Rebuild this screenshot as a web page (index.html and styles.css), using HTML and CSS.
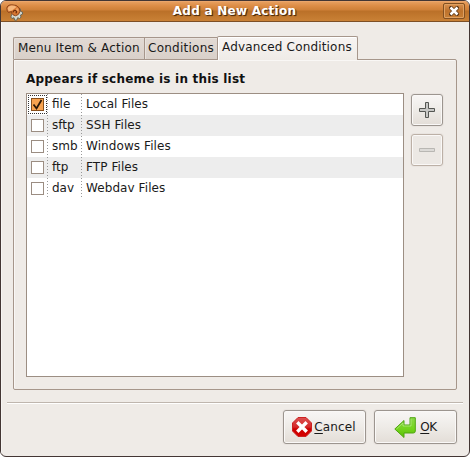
FILE: index.html
```html
<!DOCTYPE html>
<html lang="en">
<head>
<meta charset="utf-8">
<title>Add a New Action</title>
<link rel="stylesheet" href="styles.css">
</head>
<body>
<div class="window">
  <header class="titlebar">
    <svg class="app-icon" width="17" height="17" viewBox="0 0 17 17">
      <path d="M12 4l2.300.8.2 2.400 2 1v2l-2 .8.5 2.200-1.500 1.300-1.800-.8-1 2.500H8.700L8 13.700l-2 .8L4.800 13 6 10z" fill="#d5d8cd" stroke="#5f6156" stroke-width=".9"/>
      <path d="M.8 4.500Q1 1 5.500.800 11 .500 13.300 4q1.700 4-1 6.500-3 2.500-5.300.3Q5.300 9.500 5.500 7.500L2.500 8.500Q.800 7 .8 4.500z" fill="#d87a34" stroke="#84401a" stroke-width=".9"/>
      <path d="M1.600 5Q2 1.700 6 1.600q3 0 4.500 1.400L6 6.500 2.800 7.300z" fill="#f6b77c"/>
      <path d="M11 3.500q2 1.500 1.700 4L9.500 6.500z" fill="#efa263"/>
      <path d="M7 8.500Q7.500 6 9.500 6.500q2 1.200.2 2.700" fill="none" stroke="#6e2e0d" stroke-width="1.200"/>
    </svg>
    <h1 class="title">Add a New Action</h1>
    <button class="close" aria-label="Close">
      <svg width="10" height="10" viewBox="0 0 10 10"><path d="M2 2l6 6m0-6l-6 6" stroke="#5b3514" stroke-width="4" stroke-linecap="square"/><path d="M1.500 1.500l7 7m0-7l-7 7" stroke="#fff" stroke-width="2.600"/></svg>
    </button>
  </header>
  <main class="content">
    <nav class="tabs">
      <div class="tab tab-menu"><span>Menu Item &amp; Action</span></div>
      <div class="tab tab-cond"><span>Conditions</span></div>
      <div class="tab tab-active"><span>Advanced Conditions</span></div>
    </nav>
    <section class="panel">
      <h2 class="heading">Appears if scheme is in this list</h2>
      <div class="body">
        <div class="list">
          <div class="row"><div class="cell-check"><div class="focus"><i class="box checked"><svg width="13" height="13" viewBox="0 0 13 13"><path d="M2.500 6.500l3 4L10.500 2" fill="none" stroke="#2b1808" stroke-width="1.800"/></svg></i></div></div><div class="cell-scheme">file</div><div class="cell-name">Local Files</div></div>
          <div class="row"><div class="cell-check"><i class="box"></i></div><div class="cell-scheme">sftp</div><div class="cell-name">SSH Files</div></div>
          <div class="row"><div class="cell-check"><i class="box"></i></div><div class="cell-scheme">smb</div><div class="cell-name">Windows Files</div></div>
          <div class="row"><div class="cell-check"><i class="box"></i></div><div class="cell-scheme">ftp</div><div class="cell-name">FTP Files</div></div>
          <div class="row"><div class="cell-check"><i class="box"></i></div><div class="cell-scheme">dav</div><div class="cell-name">Webdav Files</div></div>
        </div>
        <div class="tools">
          <button class="button tool" aria-label="Add"><svg width="16" height="16" viewBox="0 0 16 16"><path d="M6.500.500h3v6h6v3h-6v6h-3v-6h-6v-3h6z" fill="#c8c8c6" stroke="#555753"/></svg></button>
          <button class="button tool disabled" aria-label="Remove" disabled><svg width="16" height="16" viewBox="0 0 16 16"><path d="M.500 6.500h15v3H.500z" fill="#dcdad7" stroke="#b9b7b3"/></svg></button>
        </div>
      </div>
    </section>
    <hr class="separator">
    <footer class="actions">
      <button class="button action cancel">
        <svg width="20" height="20" viewBox="0 0 20 20"><defs><linearGradient id="red" x2="0" y2="1"><stop stop-color="#dc5050"/><stop offset=".5" stop-color="#d42a2a"/><stop offset=".6" stop-color="#cc0000"/><stop offset="1" stop-color="#d40000"/></linearGradient></defs><path d="M6 .500h8L19.500 6v8L14 19.500H6L.500 14V6z" fill="url(#red)" stroke="#cc2222"/><path d="M6.500 6.500l7 7m0-7l-7 7" stroke="#fff" stroke-width="3.400" stroke-linecap="square"/></svg>
        <span><u>C</u>ancel</span>
      </button>
      <button class="button action ok">
        <svg width="22" height="22" viewBox="0 0 22 22"><defs><linearGradient id="green" x2="0" y2="1"><stop stop-color="#8bd94a"/><stop offset=".55" stop-color="#74d41c"/><stop offset="1" stop-color="#5abf08"/></linearGradient></defs><path d="M16 .700h5.300V14q0 2-2 2H10v4.500L.800 12 10 3.500V8h6z" fill="url(#green)" stroke="#4fa511"/><path d="M17 1.700v7.300H9V6L2.500 12" fill="none" stroke="#b0ea7c" stroke-width=".8"/></svg>
        <span><u>O</u>K</span>
      </button>
    </footer>
  </main>
</div>
</body>
</html>
```
FILE: styles.css
```css
* { box-sizing: border-box; }
body {
  margin: 0;
  background: #fff;
  color: #1a1a1a;
  font: 12px/15px "DejaVu Sans", sans-serif;
}
button { font: inherit; color: inherit; padding: 0; }
svg { display: block; flex: none; }
.window {
  width: 470px;
  height: 457px;
  border: 1px solid #433634;
  border-radius: 6px;
  background: #efebe7;
  overflow: hidden;
}
.titlebar {
  display: flex;
  align-items: center;
  height: 21px;
  padding: 0 5px;
  background: linear-gradient(#e9a263 0, #dc8c45 5px, #cf8038 9px, #ba7028 10px, #c98136 20px);
  border-bottom: 1px solid #7d4f25;
  box-shadow: inset 0 1px #eba66b;
}
.app-icon { margin-top: 2px; }
.title {
  flex: 1;
  margin: 0;
  padding-left: 3px;
  text-align: center;
  color: #fff;
  font-size: 12px;
  font-weight: bold;
  letter-spacing: .25px;
  line-height: 18px;
  text-shadow: 1px 1px 1px #4d2b0c, 1px 1px #754519;
}
.close {
  display: grid;
  place-items: center;
  width: 22px;
  height: 16px;
  margin-right: -1px;
  border: 1px solid #825021;
  border-radius: 2px;
  background: linear-gradient(#d99050, #bd722c 50%, #c88036);
  box-shadow: inset 0 0 0 1px #dfa061;
}
.content {
  height: 434px;
  border: solid #f7f5f3;
  border-width: 0 0 0 1px;
  padding: 14px 12px 0 11px;
}
.tabs { display: flex; align-items: flex-end; height: 23px; }
.tab {
  height: 22px;
  border: 1px solid #a6968b;
  border-right: 0;
  border-bottom: 0;
  background: linear-gradient(#e2dad4, #d9d0c9);
  box-shadow: inset 1px 1px #e9e3de;
  line-height: 21px;
  letter-spacing: .17px;
  white-space: nowrap;
  padding-left: 4px;
}
.tab-menu { width: 131px; border-radius: 2px 0 0; }
.tab-cond { width: 73px; padding-left: 3px; letter-spacing: .25px; }
.tab-active {
  position: relative;
  width: 141px;
  height: 24px;
  margin-bottom: -1px;
  border-right: 1px solid #a6968b;
  border-radius: 2px 2px 0 0;
  background: linear-gradient(#f7f4f2, #efebe7);
  box-shadow: inset 1px 1px #fff;
}
.panel {
  height: 331px;
  border: 1px solid #a6968b;
  border-radius: 0 2px 2px;
  box-shadow: inset 1px 1px #f9f7f5;
  padding: 12px;
}
.heading {
  margin: 0 0 6px;
  font-size: 12px;
  letter-spacing: .21px;
  line-height: 15px;
  color: #111;
}
.body { display: flex; gap: 7px; }
.list {
  width: 378px;
  height: 284px;
  border: 1px solid #9c8e83;
  background: #fff;
}
.row { display: flex; height: 21px; line-height: 21px; }
.row:nth-child(even) { background: #ededed; }
.cell-check {
  width: 21px;
  padding: 4px 0 0 4px;
}
.cell-check, .cell-scheme {
  background: repeating-linear-gradient(#999 0 1px, transparent 1px 3px) right / 1px 100% no-repeat;
}
.focus {
  width: 19px;
  height: 19px;
  margin: -3px 0 0 -3px;
  border: 1px dotted #333;
  padding: 2px;
}
.box {
  display: block;
  width: 13px;
  height: 13px;
  border: 1px solid #9b8d82;
  background: #fff;
}
.box.checked { border-color: #884f1b; background: #f8a350; }
.checked svg { margin: -1px; }
.cell-scheme { width: 34px; padding-left: 4px; }
.cell-name { padding-left: 4px; letter-spacing: .08px; }
.tools { display: flex; flex-direction: column; gap: 8px; padding-top: 1px; }
.button {
  display: flex;
  align-items: center;
  justify-content: center;
  border: 1px solid #9c958f;
  border-radius: 3px;
  background: linear-gradient(#f8f6f5, #eeebe7 50%, #e3ddd7);
  box-shadow: inset 0 0 0 1px #faf8f7, 0 0 0 1px #e9e4e0;
}
.tool { width: 32px; height: 32px; }
.tool.disabled { border-color: #bcb0a6; background: #ece8e4; }
.separator {
  height: 2px;
  margin: 12px -6px 6px;
  border: 0;
  border-top: 1px solid #bfb6ae;
  border-bottom: 1px solid #fff;
}
.actions { display: flex; justify-content: flex-end; gap: 8px; }
.action { width: 83px; height: 34px; }
.action span { line-height: 16px; }
.action u { text-underline-offset: 2px; }
.cancel { gap: 2px; letter-spacing: .1px; padding-right: 1px; }
.ok { gap: 4px; letter-spacing: -.4px; }
.ok svg { margin-top: 2px; }
```
